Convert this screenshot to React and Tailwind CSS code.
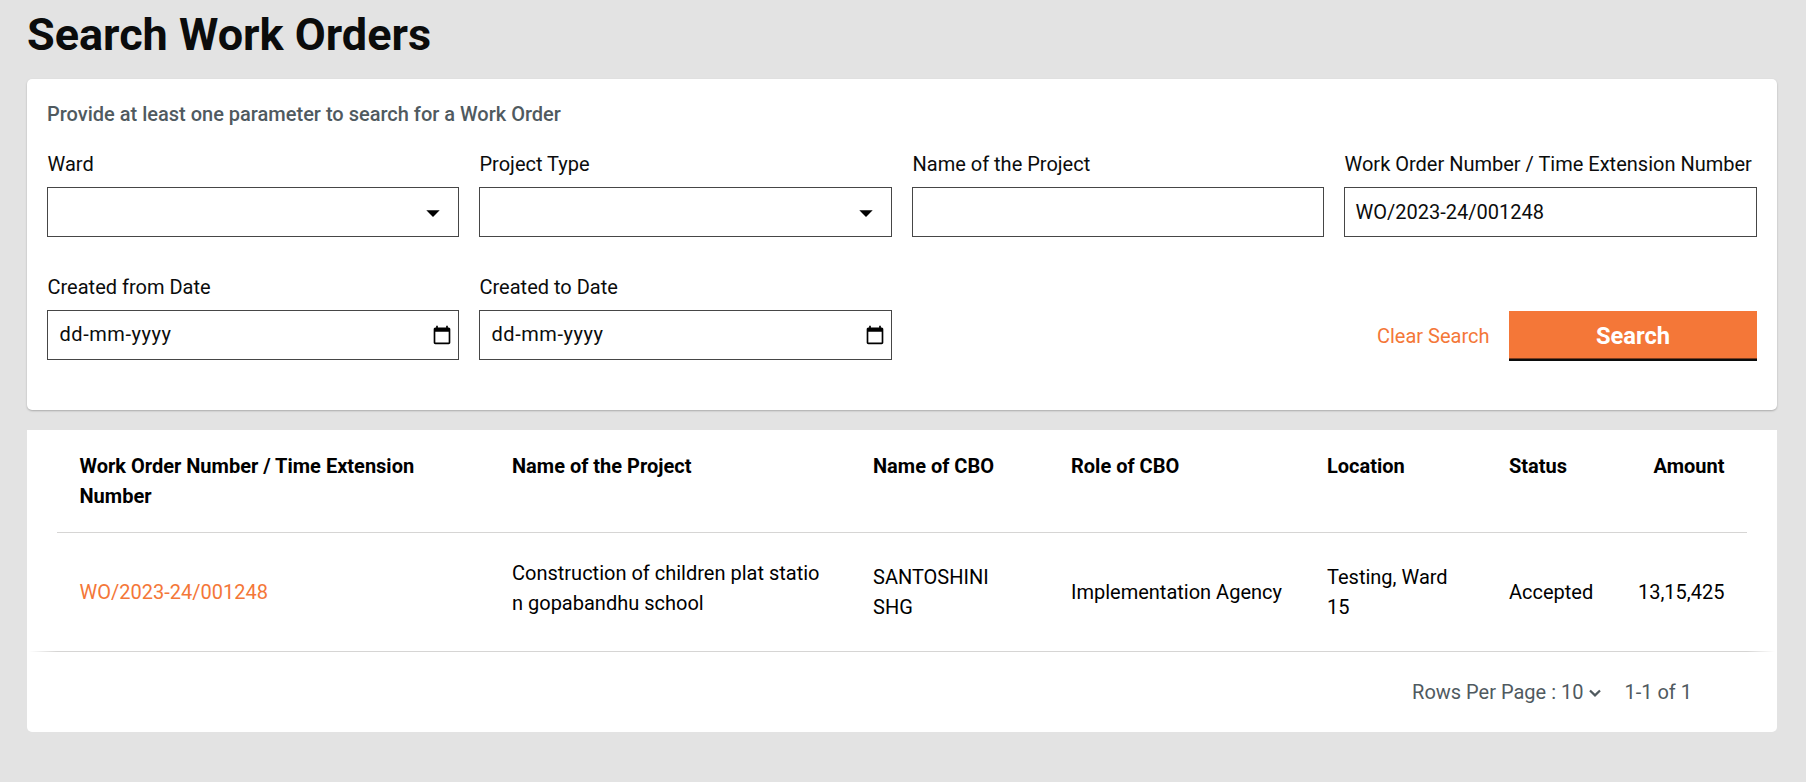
const columns = [
  { title: "Work Order Number / Time Extension Number", width: "w-[455px]" },
  { title: "Name of the Project", width: "w-[361px]" },
  { title: "Name of CBO", width: "w-[198px]" },
  { title: "Role of CBO", width: "w-[256px]" },
  { title: "Location", width: "w-[182px]" },
  { title: "Status", width: "w-[108px]" },
  { title: "Amount", width: "" },
];

function Field({ label, children }) {
  return (
    <div className="flex min-w-0 flex-col gap-2">
      <label className="whitespace-nowrap pl-[0.5px]">{label}</label>
      <div className="flex h-[50px] items-center border border-[#464646]">{children}</div>
    </div>
  );
}

function SelectField({ label }) {
  return (
    <Field label={label}>
      <svg className="ml-auto mr-[18px] mt-[2px] h-[7px] w-[14px]" viewBox="0 0 14 7" fill="#000">
        <path d="M0.3 0.2h13.4L7 6.9z" />
      </svg>
    </Field>
  );
}

function DateField({ label }) {
  return (
    <Field label={label}>
      <span className="mb-[2px] ml-[11.5px] tracking-[0.55px]">dd-mm-yyyy</span>
      <svg className="ml-auto mr-[6px] size-5" viewBox="0 0 24 24" fill="#000">
        <path d="M20 3h-1V1h-2v2H7V1H5v2H4c-1.1 0-2 .9-2 2v16c0 1.1.9 2 2 2h16c1.1 0 2-.9 2-2V5c0-1.1-.9-2-2-2zm0 18H4V8h16v13z" />
      </svg>
    </Field>
  );
}

export default function App() {
  return (
    <main className="h-[782px] overflow-hidden bg-[#e3e3e3] pl-[27px] pr-[29px] font-['Roboto',sans-serif] text-[20px] leading-[30px] text-[#0b0c0c]">
      <h1 className="h-[79px] pt-2 text-[45px] font-bold leading-[53px]">Search Work Orders</h1>

      <section className="h-[331px] rounded-[5px] bg-white p-5 shadow-[0_1px_2px_0_rgba(0,0,0,0.25)]">
        <p className="font-medium text-[#505a5f]">Provide at least one parameter to search for a Work Order</p>
        <div className="mt-5 grid grid-cols-[412px_413px_412px_413px] gap-x-5 gap-y-[35px]">
          <SelectField label="Ward" />
          <SelectField label="Project Type" />
          <Field label="Name of the Project" />
          <Field label="Work Order Number / Time Extension Number">
            <span className="pl-[10.5px]">WO/2023-24/001248</span>
          </Field>
          <DateField label="Created from Date" />
          <DateField label="Created to Date" />
          <div className="col-span-2 -mb-px flex items-end justify-end gap-[19.5px]">
            <button className="mb-[10px] text-[#f47738]">Clear Search</button>
            <button className="h-[50px] w-[248px] bg-[#f47738] text-[23.7px] font-bold text-white shadow-[inset_0_-2px_0_#0b0c0c,inset_0_-3px_0_#7a3d20]">
              Search
            </button>
          </div>
        </div>
      </section>

      <section className="mt-5 h-[302px] rounded-b-[5px] bg-white text-black">
        <div className="px-[30px]">
          <table className="w-full table-fixed border-separate border-spacing-0 text-left">
            <thead>
              <tr className="h-[103px] align-top">
                {columns.map((c, i) => (
                  <th
                    key={c.title}
                    className={`${c.width} border-b border-[#d6d5d4] pt-[21px] font-bold ${i === 0 ? "pl-[22.5px] pr-16" : ""} ${i === 6 ? "pr-[22.5px] text-right" : ""}`}
                  >
                    {c.title}
                  </th>
                ))}
              </tr>
            </thead>
            <tbody>
              <tr className="h-[118px] align-middle">
                <td className="pl-[22.5px] text-[#f47738]">WO/2023-24/001248</td>
                <td>
                  <div className="w-[312px] break-all pb-2">Construction of children plat station gopabandhu school</div>
                </td>
                <td className="pr-16">SANTOSHINI SHG</td>
                <td>Implementation Agency</td>
                <td className="pr-12">Testing, Ward 15</td>
                <td>Accepted</td>
                <td className="pr-[22.5px] text-right">13,15,425</td>
              </tr>
            </tbody>
          </table>
        </div>
        <div className="h-px bg-[linear-gradient(to_right,transparent_2px,#d6d5d4_30px,#d6d5d4_calc(100%-30px),transparent_calc(100%-2px))]" />
        <div className="flex h-20 items-center justify-end pr-[85px] text-[#505a5f]">
          <span>Rows Per Page :</span>
          <span className="ml-[5px]">10</span>
          <svg className="ml-[6px] mt-px h-[8px] w-[12px]" viewBox="0 0 12 8" fill="none" stroke="#505a5f" strokeWidth="2.3">
            <path d="M1 1.5l5 4.8 5-4.8" />
          </svg>
          <span className="ml-[23px]">1-1 of 1</span>
        </div>
      </section>
    </main>
  );
}
